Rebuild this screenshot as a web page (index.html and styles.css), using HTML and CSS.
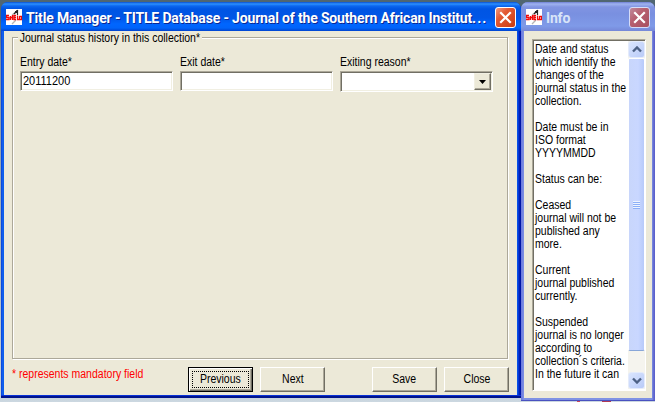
FILE: index.html
```
<!DOCTYPE html>
<html lang="en">
<head>
<meta charset="utf-8">
<title>Title Manager</title>
<link rel="stylesheet" href="styles.css">
</head>
<body>
<svg width="0" height="0" class="defs" aria-hidden="true">
  <symbol id="app" viewBox="0 0 16 16">
    <path fill="#fff" d="M0 0h16v16H0z"/>
    <path stroke="#b5b5b5" stroke-width="1.3" fill="none" d="M6 6 12 1M6 15l4-4"/>
    <path stroke="#222" stroke-width="1.2" fill="none" d="M9 2.500h2V1M11.500 1v5M8 5l3-3"/>
    <path stroke="#f00a0a" stroke-width="1.3" fill="none" d="M3 6.500H.5v2H3v2H0M4.500 7v4M4.500 8.500h2M6.500 6v5M10 6.500H8v4h2M8 8.500h2M11.500 6.500v4H13M13.500 7v3.500h2v-3h-2"/>
  </symbol>
  <symbol id="x" viewBox="0 0 21 21"><path d="m6 6 9 9m0-9-9 9" stroke="#fff" stroke-width="2.200" stroke-linecap="square"/></symbol>
  <symbol id="chev" viewBox="0 0 10 7"><path d="m1 5.500 4-4 4 4" fill="none" stroke="#4d6185" stroke-width="2.400"/></symbol>
</svg>
<div class="desktop">
  <section class="window main">
    <header class="titlebar">
      <svg class="app"><use href="#app"/></svg>
      <h1 class="title">Title Manager - TITLE Database - Journal of the Southern African Institut<span class="dots">...</span></h1>
      <button class="close"><svg><use href="#x"/></svg></button>
    </header>
    <div class="body">
      <div class="group">
        <div class="legend"><span class="narrow">Journal status history in this collection*</span></div>
        <div class="fields">
          <div class="field"><label class="narrow">Entry date*</label><div class="input"><span class="narrow digits">20111200</span></div></div>
          <div class="field"><label class="narrow">Exit date*</label><div class="input"></div></div>
          <div class="field"><label class="narrow">Exiting reason*</label><div class="input combo"><i class="drop"><svg viewBox="0 0 7 4"><path d="M0 0h7L3.500 4z"/></svg></i></div></div>
        </div>
      </div>
      <footer class="actions">
        <span class="note"><span class="narrow">* represents mandatory field</span></span>
        <button class="btn default"><span class="narrow">Previous</span></button>
        <button class="btn"><span class="narrow">Next</span></button>
        <button class="btn save"><span class="narrow">Save</span></button>
        <button class="btn"><span class="narrow">Close</span></button>
      </footer>
    </div>
  </section>
  <section class="window info">
    <header class="titlebar">
      <svg class="app"><use href="#app"/></svg>
      <h2 class="title">Info</h2>
      <button class="close"><svg><use href="#x"/></svg></button>
    </header>
    <div class="body">
      <div class="textbox">
        <div class="text"><span class="narrow">Date and status
which identify the
changes of the
journal status in the
collection.

Date must be in
ISO format
YYYYMMDD

Status can be:

Ceased
journal will not be
published any
more.

Current
journal published
currently.

Suspended
journal is no longer
according to
collection´s criteria.
In the future it can</span></div>
        <div class="scroll">
          <i class="arrow"><svg><use href="#chev"/></svg></i>
          <i class="thumb"><b class="grip"></b></i>
          <i class="arrow down"><svg><use href="#chev"/></svg></i>
        </div>
      </div>
    </div>
  </section>
</div>
</body>
</html>
```
FILE: styles.css
```
* { box-sizing: border-box; }
body { margin: 0; font: 12.5px/13px "Liberation Sans", Arial, sans-serif; color: #000; }
i { display: block; font-style: normal; }
svg { display: block; }
button { font: inherit; color: inherit; padding: 0; }
.defs { position: absolute; }
.narrow { display: inline-block; transform: scaleX(.84); transform-origin: 0 50%; }
.digits { transform: scaleX(.88); }
.btn .narrow { transform-origin: 50% 50%; }
.desktop {
  width: 655px; height: 402px; padding: 2px 0 0 1px; overflow: hidden;
  display: flex; align-items: flex-start;
  background:
    linear-gradient(#c8475f, #c8475f) 577px 401px / 3px 1px no-repeat,
    linear-gradient(#b03a55, #b03a55) 602px 401px / 9px 1px no-repeat,
    linear-gradient(#506672 0 20px, #8193a0 60px, #c5d1da 396px, #ccd8e1);
}
.window { display: flex; flex-direction: column; border-radius: 7px 7px 0 0; flex: none; }
.main { width: 520px; height: 396px; padding: 0 4px 1px 3px; border-bottom: 2px solid #00138c;
  background: linear-gradient(#0831d9, #0831d9) 0 100% / 100% 1px no-repeat, linear-gradient(90deg, #0740d5 0, #1668f5 2px, #0055e5 3px 516px, #0d4be8 517px, #0024c0 518px, #00139c 520px); }
.info { width: 134px; height: 399px; padding: 0 3px 2px 3px; background: linear-gradient(90deg, #6b78dc, #7f92e4 3px 131px, #5c61cb 133px); border-bottom: 1px solid #4a52c0; }
.titlebar { display: flex; align-items: center; height: 29px; flex: none; border-radius: 7px 7px 0 0; }
.main .titlebar { margin: 0 -4px 0 -3px; padding: 1px 5px 0 5px;
  background: linear-gradient(#0a50d0 0, #2c90ff 2px, #0c66ee 4px, #0055e3 7px, #0056e6 16px, #0066ff 22px, #0064fa 26px, #0043cf 29px); }
.info .titlebar { margin: 0 -3px; padding: 1px 5px 0; background: linear-gradient(#7080d5 0, #9fb3f0 2px, #8194e2 5px, #7990e0 12px, #7f9ae8 24px, #7688d8 29px); }
.app { width: 16px; height: 16px; flex: none; }
.title { margin: 2px auto 0 4px; font: bold 14px/18px Roboto, "Open Sans", sans-serif; letter-spacing: -.16px; color: #fff; white-space: nowrap; text-shadow: 1px 1px 0 #0a2894; }
.dots { letter-spacing: 1px; }
.info .title { color: #d8e4f8; text-shadow: none; }
.close { width: 21px; height: 21px; flex: none; border: 1px solid #fff; border-radius: 3px; background: linear-gradient(135deg, #ef9a80, #e35a34 35%, #c93c12); }
.close svg { width: 21px; height: 21px; margin: -1px; }
.info .close { background: linear-gradient(135deg, #c08a9c, #b76070 40%, #a85060); border-color: #d5dcf8; }
.body { flex: 1; min-height: 0; background: #ece9d8; }
.main .body { padding: 6px 9px 3px 8px; display: flex; flex-direction: column; }
.group { height: 322px; border: 1px solid #aca899; box-shadow: 1px 1px 0 #fff, inset 1px 1px 0 #fff; padding: 0 7px; }
.legend { height: 13px; margin-top: -6px; display: flex; }
.legend span { background: #ece9d8; padding: 0 2px; margin-left: -2px; }
.fields { display: flex; gap: 7px; margin-top: 11px; }
.field { width: 153px; }
label.narrow { display: block; height: 15px; white-space: nowrap; }
.input { height: 20px; padding: 1px 2px; background: #fff; border: 1px solid; border-color: #aca899 #fff #fff #aca899; box-shadow: inset 1px 1px 0 #716f64, inset -1px -1px 0 #f1efe2; display: flex; align-items: center; }
.combo { height: 21px; justify-content: flex-end; padding: 1px; }
.drop { width: 17px; height: 17px; background: #ece9d8; border: 1px solid; border-color: #f1efe2 #716f64 #716f64 #f1efe2; box-shadow: inset -1px -1px 0 #aca899; display: flex; align-items: center; justify-content: center; }
.drop svg { width: 7px; height: 4px; }
.actions { display: flex; margin-top: 8px; align-items: flex-start; }
.note { width: 176px; flex: none; margin-top: 1px; color: #f00; white-space: nowrap; }
.btn { width: 65px; height: 25px; margin-right: 7px; flex: none; background: #ece9d8; border: 1px solid; border-color: #fff #716f64 #716f64 #fff; box-shadow: inset -1px -1px 0 #aca899; position: relative; }
.save { margin-left: 40px; }
.default { border-color: #000; box-shadow: inset 1px 1px 0 #fff, inset -1px -1px 0 #716f64, inset -2px -2px 0 #aca899; }
.default::after { content: ""; position: absolute; inset: 3px; border: 1px dotted #000; }
.info .body { padding: 8px 6px 7px 8px; }
.textbox { height: 352px; background: #fff; border: 1px solid; border-color: #aca899 #fff #fff #aca899; box-shadow: inset 1px 1px 0 #716f64; padding: 1px; display: flex; justify-content: space-between; }
.text { white-space: pre; padding: 2px 0 0 1px; width: 94px; }
.scroll { width: 17px; flex: none; background: #f5f4ee; display: flex; flex-direction: column; }
.arrow { height: 17px; border: 1px solid #e4ebfb; border-radius: 3px; background: linear-gradient(135deg, #dae5fe, #b9cbf8); display: flex; align-items: center; justify-content: center; }
.arrow svg { width: 10px; height: 7px; }
.down { margin-top: auto; }
.down svg { transform: scaleY(-1); }
.thumb { height: 293px; border: 1px solid #fff; border-bottom-color: #88a6d8; border-radius: 2px; background: linear-gradient(90deg, #c8d6fb, #c9d7ff 60%, #b7cafa); display: flex; align-items: center; justify-content: center; }
.grip { width: 7px; height: 8px; background: repeating-linear-gradient(#eef4fe 0 1px, #8cb0f8 1px 2px); }
```
